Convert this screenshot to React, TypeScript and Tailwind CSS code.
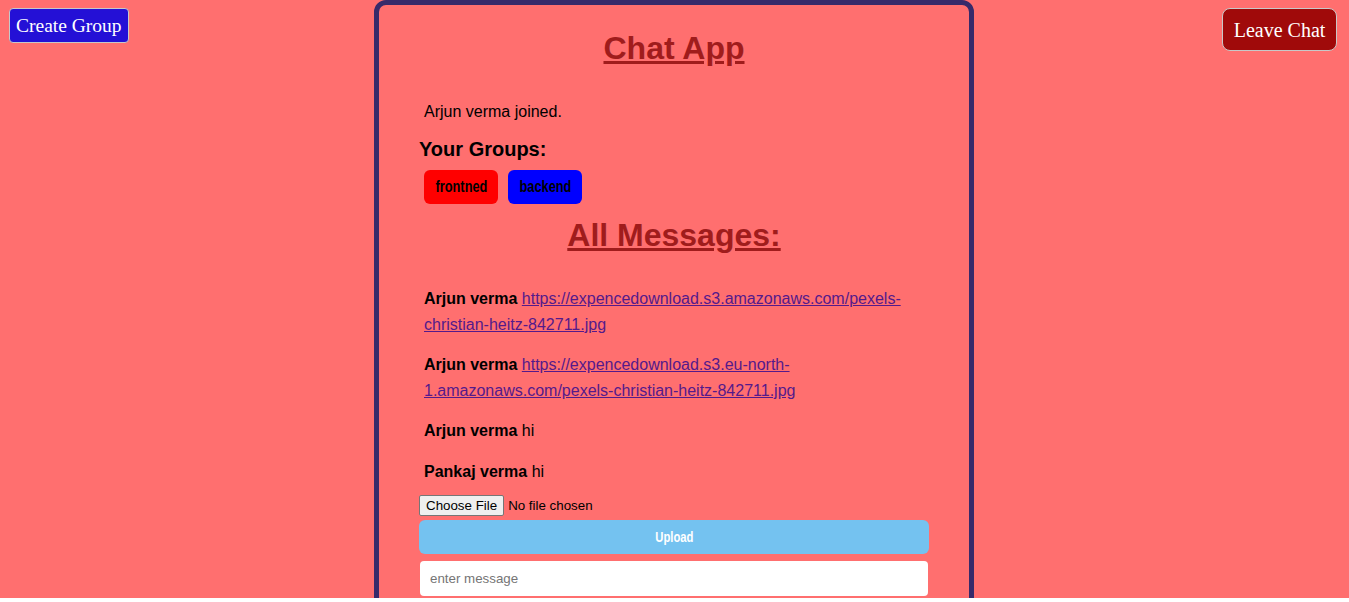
import React from "react";

const messages = [
  {
    name: "Arjun verma",
    link: "https://expencedownload.s3.amazonaws.com/pexels-christian-heitz-842711.jpg",
  },
  {
    name: "Arjun verma",
    link: "https://expencedownload.s3.eu-north-1.amazonaws.com/pexels-christian-heitz-842711.jpg",
  },
  { name: "Arjun verma", text: "hi" },
  { name: "Pankaj verma", text: "hi" },
];

function App() {
  return (
    <div className="h-[598px] overflow-hidden bg-[#ff6f6f] grid grid-cols-[374px_600px_1fr] items-start font-['Liberation_Sans',Arial,sans-serif] text-black">
      <div className="pl-[9px] pt-[8px]">
        <button className="h-[35px] px-[6px] rounded-[4px] border border-[#c8c8c8] bg-[#2410d6] text-white text-[19.5px] font-['Liberation_Serif',serif]">
          Create Group
        </button>
      </div>

      <div className="border-[5px] border-[#372a6a] rounded-[12px] px-[40px] pb-16 flex flex-col">
        <h1 className="mt-[25px] text-[32px] leading-[37px] font-bold underline text-center text-[#a01c1c]">
          Chat App
        </h1>
        <p className="mt-[36px] ml-[5px] text-[16px] leading-[18px]">Arjun verma joined.</p>
        <h2 className="mt-[17px] text-[20px] leading-[23px] font-bold">Your Groups:</h2>
        <div className="mt-[9px] ml-[5px] flex gap-[10px]">
          <button className="h-[34px] w-[74px] rounded-[6px] bg-[#ff0000] flex items-center justify-center">
            <span className="inline-block text-[16px] font-bold scale-x-[0.8]">frontned</span>
          </button>
          <button className="h-[34px] w-[74px] rounded-[6px] bg-[#0000ff] flex items-center justify-center">
            <span className="inline-block text-[16px] font-bold scale-x-[0.8]">backend</span>
          </button>
        </div>
        <h2 className="mt-[13px] text-[32px] leading-[37px] font-bold underline text-center text-[#a01c1c]">
          All Messages:
        </h2>

        <div className="mt-[32px] px-[5px] flex flex-col gap-[14px] text-[16px] leading-[26px]">
          {messages.map((m, i) => (
            <p key={i} className={i === 3 ? "mt-[1px]" : ""}>
              <b>{m.name}</b>{" "}
              {m.link ? (
                <a href="#" className="underline text-[#551a8b]">
                  {m.link}
                </a>
              ) : (
                m.text
              )}
            </p>
          ))}
        </div>

        <input
          type="file"
          className="mt-[10px] h-[21px] text-[13.33px] file:h-[21px] file:mr-[4px] file:px-[6px] file:border file:border-[#767676] file:rounded-[2px] file:bg-[#efefef] file:text-black"
        />
        <button className="mt-[4px] h-[34px] w-full rounded-[6px] bg-[#74c2f0] flex items-center justify-center">
          <span className="inline-block text-white text-[15px] font-bold scale-x-[0.75]">Upload</span>
        </button>
        <input
          type="text"
          placeholder="enter message"
          className="mt-[7px] mx-[1px] h-[35px] rounded-[4px] bg-white px-[10px] text-[13.33px] placeholder:text-[#757575] outline-none"
        />
      </div>

      <div className="flex justify-end pr-[12px] pt-[8px]">
        <button className="h-[43px] w-[115px] rounded-[8px] border border-[#c8c8c8] bg-[#a00a0a] text-white text-[20px] font-['Liberation_Serif',serif]">
          Leave Chat
        </button>
      </div>
    </div>
  );
}

export default App;
